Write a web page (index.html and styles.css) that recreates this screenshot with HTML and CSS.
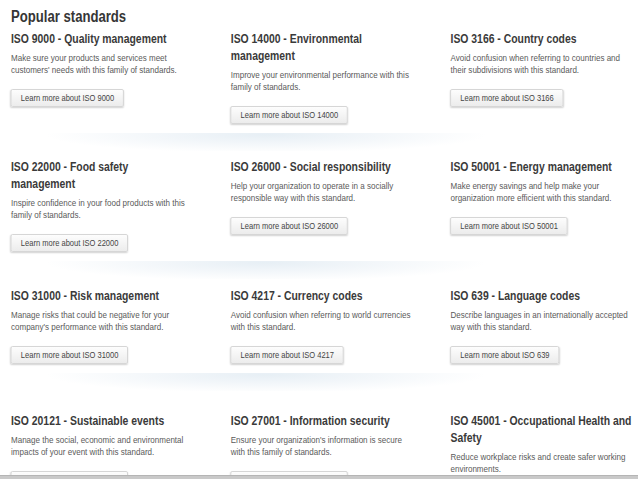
FILE: index.html
```html
<!DOCTYPE html>
<html lang="en">
  <head>
    <meta charset="UTF-8" />
    <meta name="viewport" content="width=device-width, initial-scale=1.0" />
    <title>Popular standards</title>
    <link rel="stylesheet" href="styles.css">
  </head>
  <body>
    <!-- Slide frame: the page inside is cut off at the bottom by the grey bar -->
    <div class="frame">
      <div class="page">
        <h1 class="title">Popular standards</h1>

        <section class="row">
          <div class="cards">
            <div class="card">
              <h3>ISO 9000 - Quality management</h3>
              <p>Make sure your products and services meet customers' needs with this family of standards.</p>
              <a class="btn" href="#">Learn more about ISO 9000</a>
            </div>
            <div class="card">
              <h3>ISO 14000 - Environmental management</h3>
              <p>Improve your environmental performance with this family of standards.</p>
              <a class="btn" href="#">Learn more about ISO 14000</a>
            </div>
            <div class="card">
              <h3>ISO 3166 - Country codes</h3>
              <p>Avoid confusion when referring to countries and their subdivisions with this standard.</p>
              <a class="btn" href="#">Learn more about ISO 3166</a>
            </div>
          </div>
          <div class="sep"></div>
        </section>

        <section class="row row-tall">
          <div class="cards">
            <div class="card">
              <h3>ISO 22000 - Food safety management</h3>
              <p>Inspire confidence in your food products with this family of standards.</p>
              <a class="btn" href="#">Learn more about ISO 22000</a>
            </div>
            <div class="card">
              <h3>ISO 26000 - Social responsibility</h3>
              <p>Help your organization to operate in a socially responsible way with this standard.</p>
              <a class="btn" href="#">Learn more about ISO 26000</a>
            </div>
            <div class="card">
              <h3>ISO 50001 - Energy management</h3>
              <p>Make energy savings and help make your organization more efficient with this standard.</p>
              <a class="btn" href="#">Learn more about ISO 50001</a>
            </div>
          </div>
          <div class="sep"></div>
        </section>

        <section class="row row-short">
          <div class="cards">
            <div class="card">
              <h3>ISO 31000 - Risk management</h3>
              <p>Manage risks that could be negative for your company's performance with this standard.</p>
              <a class="btn" href="#">Learn more about ISO 31000</a>
            </div>
            <div class="card">
              <h3>ISO 4217 - Currency codes</h3>
              <p>Avoid confusion when referring to world currencies with this standard.</p>
              <a class="btn" href="#">Learn more about ISO 4217</a>
            </div>
            <div class="card">
              <h3>ISO 639 - Language codes</h3>
              <p>Describe languages in an internationally accepted way with this standard.</p>
              <a class="btn" href="#">Learn more about ISO 639</a>
            </div>
          </div>
          <div class="sep"></div>
        </section>

        <section class="row">
          <div class="cards">
            <div class="card">
              <h3>ISO 20121 - Sustainable events</h3>
              <p>Manage the social, economic and environmental impacts of your event with this standard.</p>
              <a class="btn" href="#">Learn more about ISO 20121</a>
            </div>
            <div class="card">
              <h3>ISO 27001 - Information security</h3>
              <p>Ensure your organization's information is secure with this family of standards.</p>
              <a class="btn" href="#">Learn more about ISO 27001</a>
            </div>
            <div class="card">
              <h3>ISO 45001 - Occupational Health and Safety</h3>
              <p>Reduce workplace risks and create safer working environments.</p>
              <a class="btn" href="#">Learn more about ISO 45001</a>
            </div>
          </div>
        </section>
      </div>
    </div>

    <!-- Grey bar at the bottom of the slide -->
    <div class="bottom-bar"></div>
  </body>
</html>
```

FILE: styles.css
```css
/* Base */
body {
  margin: 0;
  overflow: hidden;
  background: #fff;
  font-family: "Liberation Sans", Arial, sans-serif;
  color: #333;
}

.frame {
  width: 638px;
  height: 475px;
  overflow: hidden;
}

/* The screenshot is a wide page squeezed into a 4:3 slide,
   so the whole page is narrowed horizontally. */
.page {
  width: 778px;
  padding: 7px 0 0 13.4px;
  box-sizing: border-box;
  transform: scaleX(0.82);
  transform-origin: 0 0;
}

.title {
  margin: 0 0 3.5px;
  font-size: 16px;
  line-height: 20px;
  font-weight: bold;
  color: #363636;
}

/* One row of three standards */
.row {
  height: 128px;
}

.row-tall {
  height: 129px;
}

.row-short {
  height: 125px;
}

.cards {
  display: grid;
  grid-template-columns: 223px 223px 227px;
  column-gap: 45px;
}

.card {
  display: flex;
  flex-direction: column;
  align-items: flex-start;
}

.card h3 {
  margin: 0;
  font-size: 12.7px;
  line-height: 17px;
  font-weight: bold;
  color: #3a3a3a;
}

.card p {
  margin: 4.5px 0 0;
  font-size: 9.8px;
  line-height: 12px;
  color: #5a5a5a;
}

/* "Learn more" button */
.btn {
  display: inline-block;
  margin-top: 12.5px;
  height: 18px;
  box-sizing: border-box;
  padding: 0 11px;
  line-height: 16px;
  font-size: 9.2px;
  color: #444;
  text-decoration: none;
  border: 1px solid #d2d2d2;
  border-radius: 2px;
  background: linear-gradient(#fdfdfd, #ececec);
  box-shadow: 0 1px 2px rgba(0, 0, 0, 0.18);
}

/* Soft blue glow between rows */
.sep {
  width: 537px;
  height: 18px;
  margin: 9px 0 0 43px;
  background: radial-gradient(ellipse 50% 100% at 50% 10%, #e7eff5 0%, rgba(236, 242, 247, 0.7) 45%, rgba(255, 255, 255, 0) 100%);
}

.bottom-bar {
  height: 4px;
  background: #c9c9c9;
  border-top: 1px solid #b5b5b5;
  box-sizing: border-box;
}
```
